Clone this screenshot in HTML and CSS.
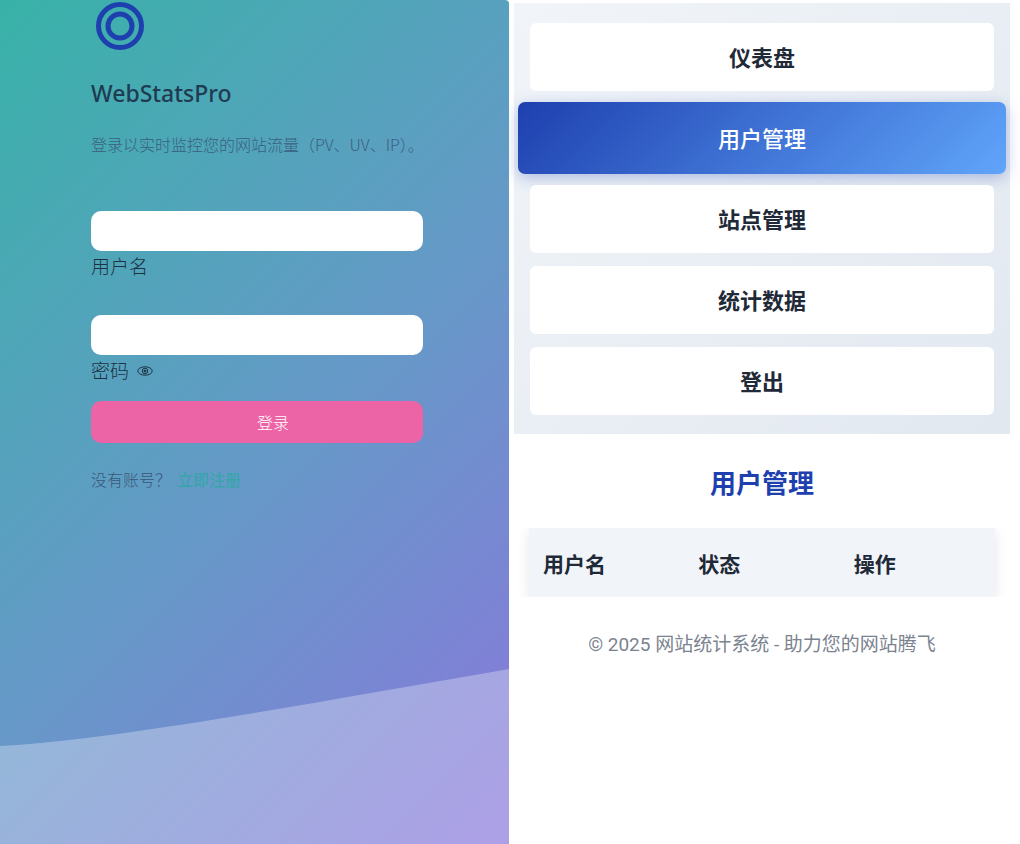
FILE: index.html
```html
<!DOCTYPE html>
<html lang="zh-CN">
<head>
    <meta charset="UTF-8">
    <meta name="viewport" content="width=device-width, initial-scale=1.0">
    <title>WebStatsPro</title>
    <link rel="stylesheet" href="styles.css">
</head>
<body>
    <div class="page">
        <!-- Login -->
        <section class="login">
            <div class="login-content">
                <svg class="logo" viewBox="0 0 58 52" fill="none" stroke="#1e40af" stroke-width="5" aria-hidden="true">
                    <circle cx="29" cy="26" r="21.5"/>
                    <circle cx="29" cy="26" r="12"/>
                </svg>
                <h1>WebStatsPro</h1>
                <p class="tagline">登录以实时监控您的网站流量（PV、UV、IP）。</p>

                <form class="login-form">
                    <div class="field">
                        <input type="text" id="username" required>
                        <label for="username">用户名</label>
                    </div>
                    <div class="field">
                        <input type="password" id="password" required>
                        <div class="field-row">
                            <label for="password">密码</label>
                            <button type="button" class="toggle" aria-label="显示密码">
                                <svg viewBox="0 0 16 12" fill="none" stroke="currentColor">
                                    <ellipse cx="8" cy="6" rx="7.2" ry="4.2"/>
                                    <circle cx="8" cy="6" r="2.8"/>
                                    <circle cx="8" cy="6" r="1" fill="currentColor"/>
                                </svg>
                            </button>
                        </div>
                    </div>
                    <button type="submit" class="submit">登录</button>
                </form>

                <p class="register">没有账号？<a href="#">立即注册</a></p>
            </div>
            <svg class="wave" viewBox="0 0 509 175" preserveAspectRatio="none" aria-hidden="true">
                <path d="M0,77 C120,70 300,36 509,0 V175 H0 Z" fill="#fff" fill-opacity="0.3"/>
            </svg>
        </section>

        <!-- Admin -->
        <section class="admin">
            <nav class="menu">
                <a href="#">仪表盘</a>
                <a href="#" class="active">用户管理</a>
                <a href="#">站点管理</a>
                <a href="#">统计数据</a>
                <a href="#">登出</a>
            </nav>
            <main>
                <h2>用户管理</h2>
                <div class="table-wrap">
                    <table>
                        <thead>
                            <tr>
                                <th>用户名</th>
                                <th>状态</th>
                                <th>操作</th>
                            </tr>
                        </thead>
                    </table>
                </div>
            </main>
            <footer>© 2025 网站统计系统 - 助力您的网站腾飞</footer>
        </section>
    </div>
</body>
</html>
```
FILE: styles.css
```css
* {
    box-sizing: border-box;
}

body {
    margin: 0;
    background: #fff;
    font-family: "Noto Sans", "Noto Sans CJK SC", sans-serif;
}

.page {
    display: grid;
    grid-template-columns: 1fr 1fr;
    gap: 2px;
    min-height: 100vh;
}

/* Login side */
.login {
    position: relative;
    padding: 0 86px 0 91px;
    border-top-right-radius: 4px;
    background: linear-gradient(135deg, #38b2a8 0%, #6699c8 54%, #8a76dc 100%);
    overflow: hidden;
}

.login-content {
    position: relative;
    z-index: 1;
}

.logo {
    display: block;
    width: 58px;
    height: 52px;
}

h1 {
    margin: 23px 0 0;
    font-size: 23px;
    font-weight: 500;
    line-height: 36px;
    color: #1f3b52;
}

.tagline {
    margin: 21px 0 0;
    font-family: "Noto Sans CJK SC", sans-serif;
    font-size: 16px;
    font-weight: 300;
    line-height: 24px;
    white-space: nowrap;
    color: #3a5f80;
}

.login-form {
    margin-top: 55px;
    font-family: "Noto Sans CJK SC", sans-serif;
    font-weight: 300;
}

.field {
    margin-bottom: 34px;
}

.field:nth-child(2) {
    margin-bottom: 16px;
}

.field input {
    display: block;
    width: 100%;
    height: 40px;
    padding: 0 12px;
    border: none;
    border-radius: 10px;
    background: #fff;
    font: inherit;
}

.field label {
    display: block;
    font-size: 19px;
    line-height: 30px;
    color: #1d3345;
}

.field-row {
    display: flex;
    align-items: center;
    gap: 8px;
}

.toggle {
    padding: 2px 0 0;
    border: none;
    background: none;
    color: #1d3345;
    cursor: pointer;
}

.toggle svg {
    display: block;
    width: 16px;
    height: 12px;
}

.submit {
    width: 100%;
    height: 42px;
    padding: 0 0 0 32px;
    border: none;
    border-radius: 10px;
    background: #ed64a6;
    color: #fff;
    font: inherit;
    font-size: 16px;
    cursor: pointer;
}

.register {
    margin: 24px 0 0;
    font-family: "Noto Sans CJK SC", sans-serif;
    font-size: 16px;
    font-weight: 300;
    line-height: 24px;
    color: #3a5878;
}

.register a {
    margin-left: 6px;
    font-weight: 500;
    color: #38a5ac;
    text-decoration: none;
}

.wave {
    position: absolute;
    left: 0;
    bottom: 0;
    width: 100%;
    height: 175px;
}

/* Admin side */
.admin {
    padding: 3px 10px 0 3px;
    font-family: Roboto, "Noto Sans CJK SC", sans-serif;
    color: #1f2937;
}

.menu {
    display: flex;
    flex-direction: column;
    gap: 13px;
    padding: 20px 16px 19px;
    background: linear-gradient(135deg, #f1f5f9, #e2e8f0);
}

.menu a {
    height: 68px;
    border-radius: 6px;
    background: #fff;
    color: #1f2937;
    font-size: 22px;
    font-weight: 600;
    line-height: 72px;
    text-align: center;
    text-decoration: none;
}

.menu .active {
    height: 72px;
    margin: -2px -12px;
    border-radius: 7px;
    background: linear-gradient(135deg, #1e40af, #60a5fa);
    box-shadow: 0 4px 15px rgba(30, 64, 175, 0.3);
    color: #fff;
    font-weight: 500;
    line-height: 76px;
}

h2 {
    margin: 30px 0 24px;
    color: #1e40af;
    font-size: 26px;
    font-weight: 600;
    line-height: 40px;
    text-align: center;
}

.table-wrap {
    padding: 0 15px;
    overflow: hidden;
}

table {
    width: 100%;
    border-collapse: collapse;
    table-layout: fixed;
    background: #f1f5f9;
    box-shadow: 0 4px 12px rgba(0, 0, 0, 0.1);
}

th {
    height: 69px;
    padding: 0 14px;
    font-size: 21px;
    font-weight: 600;
    text-align: left;
}

footer {
    margin-top: 33px;
    color: #7b838f;
    font-size: 19px;
    line-height: 30px;
    text-align: center;
}
```
